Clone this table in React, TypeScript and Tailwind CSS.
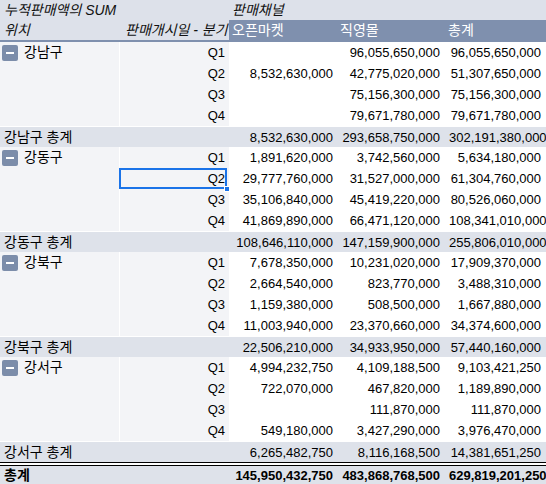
import React from 'react';

type Row = { q: string; a: string; b: string; c: string };
type Group = { name: string; rows: Row[]; total: [string, string, string] };

const GROUPS: Group[] = [
  {
    name: '강남구',
    rows: [
      { q: 'Q1', a: '', b: '96,055,650,000', c: '96,055,650,000' },
      { q: 'Q2', a: '8,532,630,000', b: '42,775,020,000', c: '51,307,650,000' },
      { q: 'Q3', a: '', b: '75,156,300,000', c: '75,156,300,000' },
      { q: 'Q4', a: '', b: '79,671,780,000', c: '79,671,780,000' },
    ],
    total: ['8,532,630,000', '293,658,750,000', '302,191,380,000'],
  },
  {
    name: '강동구',
    rows: [
      { q: 'Q1', a: '1,891,620,000', b: '3,742,560,000', c: '5,634,180,000' },
      { q: 'Q2', a: '29,777,760,000', b: '31,527,000,000', c: '61,304,760,000' },
      { q: 'Q3', a: '35,106,840,000', b: '45,419,220,000', c: '80,526,060,000' },
      { q: 'Q4', a: '41,869,890,000', b: '66,471,120,000', c: '108,341,010,000' },
    ],
    total: ['108,646,110,000', '147,159,900,000', '255,806,010,000'],
  },
  {
    name: '강북구',
    rows: [
      { q: 'Q1', a: '7,678,350,000', b: '10,231,020,000', c: '17,909,370,000' },
      { q: 'Q2', a: '2,664,540,000', b: '823,770,000', c: '3,488,310,000' },
      { q: 'Q3', a: '1,159,380,000', b: '508,500,000', c: '1,667,880,000' },
      { q: 'Q4', a: '11,003,940,000', b: '23,370,660,000', c: '34,374,600,000' },
    ],
    total: ['22,506,210,000', '34,933,950,000', '57,440,160,000'],
  },
  {
    name: '강서구',
    rows: [
      { q: 'Q1', a: '4,994,232,750', b: '4,109,188,500', c: '9,103,421,250' },
      { q: 'Q2', a: '722,070,000', b: '467,820,000', c: '1,189,890,000' },
      { q: 'Q3', a: '', b: '111,870,000', c: '111,870,000' },
      { q: 'Q4', a: '549,180,000', b: '3,427,290,000', c: '3,976,470,000' },
    ],
    total: ['6,265,482,750', '8,116,168,500', '14,381,651,250'],
  },
];

const MinusBox = () => (
  <span className="w-4 h-4 rounded-[2px] bg-[#7c8daa] flex items-center justify-center shrink-0">
    <span className="w-2 h-[2px] bg-white" />
  </span>
);

const NumCells = ({ v, bold }: { v: [string, string, string]; bold?: boolean }) => (
  <>
    <div className={`w-[107px] shrink-0 text-right pr-[3px] whitespace-nowrap ${bold ? 'font-bold' : ''}`}>{v[0]}</div>
    <div className={`w-[108px] shrink-0 text-right pr-[4px] whitespace-nowrap ${bold ? 'font-bold' : ''}`}>{v[1]}</div>
    <div className={`w-[102px] shrink-0 text-right pl-[5px] pr-[5px] whitespace-nowrap ${bold ? 'font-bold' : ''}`}>{v[2]}</div>
  </>
);

export default function App() {
  return (
    <div
      className="w-[546px] h-[484px] overflow-hidden bg-white text-[13px] text-black leading-[21px]"
      style={{ fontFamily: '"Liberation Sans", "Noto Sans CJK KR", sans-serif' }}
    >
      {/* header row 1 */}
      <div className="flex h-[20px] bg-[#dde1ea] italic text-[#111] leading-[20px] text-[14px]">
        <div className="w-[229px] shrink-0 pl-1">누적판매액의 SUM</div>
        <div className="pl-[3px]">판매채널</div>
      </div>
      {/* header row 2 */}
      <div className="flex h-[20px] leading-[20px] text-[14px]">
        <div className="w-[120px] shrink-0 pl-1 bg-[#dde1ea] italic text-[#111]">위치</div>
        <div className="w-[109px] shrink-0 bg-[#dde1ea] italic text-[#111] overflow-hidden whitespace-nowrap pl-[5px]">판매개시일 - 분기</div>
        <div className="flex-1 flex bg-[#7f90ae] text-white">
          <div className="w-[107px] shrink-0 pl-[3px]">오픈마켓</div>
          <div className="w-[108px] shrink-0 pl-[4px]">직영몰</div>
          <div className="flex-1 pl-[4px]">총계</div>
        </div>
      </div>
      <div className="h-[2px] bg-[#7f90ae]" />

      {GROUPS.map((g, gi) => (
        <div key={g.name}>
          {g.rows.map((r, ri) => (
            <div key={r.q} className="flex h-[21px]">
              <div className="w-[120px] shrink-0 bg-[#f3f4f7] border-r border-white flex items-center gap-[6px] pl-[2px]">
                {ri === 0 && (
                  <>
                    <MinusBox />
                    <span className="text-[14px]">{g.name}</span>
                  </>
                )}
              </div>
              <div className="w-[109px] shrink-0 bg-[#f3f4f7] text-right pr-1 relative">
                {r.q}
                {gi === 1 && ri === 1 && (
                  <>
                    <div className="absolute left-[-1px] top-0 w-[108px] h-[21px] border-2 border-[#1a73e8]" />
                    <div className="absolute left-[104px] top-[18px] w-[6px] h-[6px] bg-[#1a73e8] border border-white z-10" />
                  </>
                )}
              </div>
              <NumCells v={[r.a, r.b, r.c]} />
            </div>
          ))}
          <div className="flex h-[21px] bg-[#dee2ea] border-t border-white">
            <div className="w-[229px] shrink-0 pl-1 text-[14px]">{g.name} 총계</div>
            <NumCells v={g.total} />
          </div>
        </div>
      ))}

      <div className="h-px bg-black" />
      <div className="h-[2px] bg-white" />
      <div className="h-px bg-black" />
      <div className="flex h-[21px] bg-[#dee2ea] leading-[19px]">
        <div className="w-[229px] shrink-0 pl-1 font-bold text-[14px]">총계</div>
        <NumCells v={['145,950,432,750', '483,868,768,500', '629,819,201,250']} bold />
      </div>
    </div>
  );
}
